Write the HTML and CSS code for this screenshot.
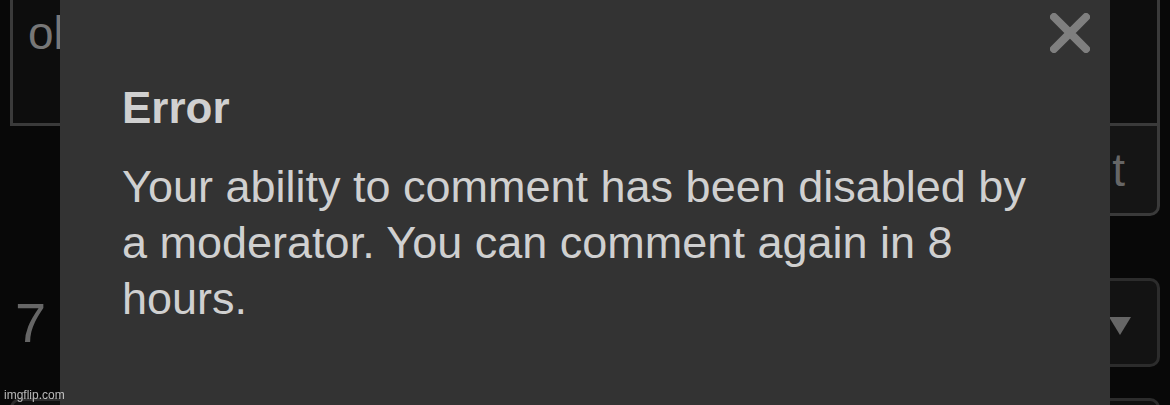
FILE: index.html
```html
<!DOCTYPE html>
<html lang="en">
<head>
    <meta charset="UTF-8">
    <meta name="viewport" content="width=device-width, initial-scale=1.0">
    <title>Comment - Error</title>
    <link rel="stylesheet" href="styles.css">
</head>
<body>
    <div class="page">
        <div class="comment-box">ol</div>
        <div class="post-row">
            <button class="post-btn">Comment</button>
        </div>
        <div class="meta-row">
            <span class="count">7</span>
            <div class="select-box"><span class="caret"></span></div>
        </div>
        <div class="next-box"></div>
    </div>

    <!-- Error modal -->
    <div class="modal">
        <svg class="close" width="40" height="40" viewBox="0 0 40 40">
            <path d="M4 4 L36 36 M36 4 L4 36" stroke="#7f7f7f" stroke-width="8" stroke-linecap="round" fill="none"/>
        </svg>
        <h2 class="modal-title">Error</h2>
        <p class="modal-text">Your ability to comment has been disabled by a moderator. You can comment again in 8 hours.</p>
    </div>

    <div class="watermark">imgflip.com</div>
</body>
</html>
```

FILE: styles.css
```css
* {
    margin: 0;
    padding: 0;
    box-sizing: border-box;
}

body {
    font-family: 'Liberation Sans', Arial, sans-serif;
    background-color: #080808;
    height: 100vh;
    overflow: hidden;
}

.page {
    padding: 0 10px;
    margin-top: -40px;
}

.comment-box {
    height: 166px;
    background-color: #0d0d0d;
    border: 3px solid #3a3a3a;
    color: #777;
    font-size: 46px;
    padding: 47px 15px;
    line-height: 46px;
}

.post-row {
    display: flex;
    justify-content: flex-end;
}

.post-btn {
    height: 93px;
    width: 240px;
    margin-top: -3px;
    background-color: #151515;
    border: 3px solid #3a3a3a;
    border-radius: 0 0 10px 10px;
    color: #666;
    font-family: inherit;
    font-size: 46px;
    text-align: right;
    padding-right: 32px;
}

.meta-row {
    display: flex;
    justify-content: space-between;
    align-items: center;
    margin-top: 62px;
    height: 89px;
}

.count {
    font-size: 56px;
    color: #666;
    padding-left: 5px;
    font-weight: 300;
}

.select-box {
    width: 150px;
    height: 89px;
    background-color: #131313;
    border: 3px solid #2c2c2c;
    border-radius: 10px;
    display: flex;
    align-items: center;
    justify-content: flex-end;
    padding-right: 26px;
    padding-top: 6px;
}

.caret {
    width: 0;
    height: 0;
    border-left: 11px solid transparent;
    border-right: 11px solid transparent;
    border-top: 18px solid #666;
}

.next-box {
    margin-top: 31px;
    height: 40px;
    border: 3px solid #2c2c2c;
    border-radius: 10px;
    background-color: #101010;
}

/* Modal */
.modal {
    position: fixed;
    top: 0;
    bottom: 0;
    left: 60px;
    right: 60px;
    background-color: #333;
    padding: 80px 62px 0;
    color: #d0d0d0;
}

.close {
    position: absolute;
    top: 13px;
    right: 20px;
}

.modal-title {
    font-size: 44px;
    line-height: 56px;
    font-weight: bold;
    margin-bottom: 23px;
}

.modal-text {
    font-size: 45px;
    line-height: 56px;
    max-width: 930px;
}

.watermark {
    position: fixed;
    left: 4px;
    bottom: 3px;
    font-size: 12px;
    color: rgba(255, 255, 255, 0.7);
}
```
